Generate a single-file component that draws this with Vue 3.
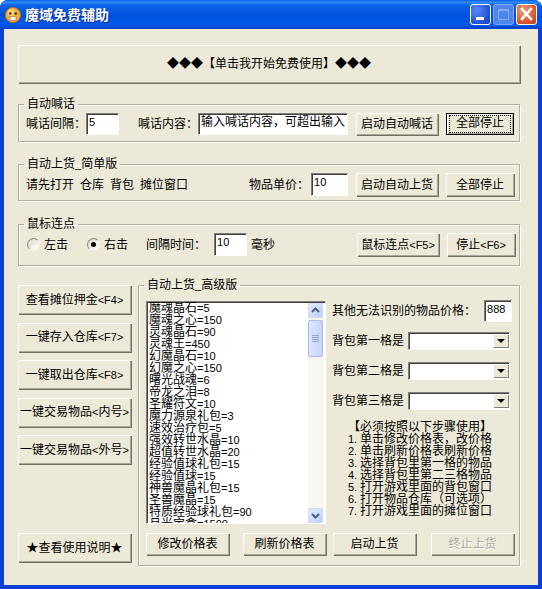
<template>
  <div class="window">
    <div class="titlebar">
      <svg class="app-icon" viewBox="0 0 18 18" width="18" height="18">
        <circle cx="9" cy="9" r="7.6" fill="#f0b040" stroke="#b86a18" stroke-width="1" />
        <circle cx="7" cy="6.5" r="3.5" fill="#fbdc8c" opacity="0.7" />
        <circle cx="6.3" cy="7.5" r="1.3" fill="#4a2a10" />
        <circle cx="11.7" cy="7.5" r="1.3" fill="#4a2a10" />
        <path d="M5.5 11.2 Q9 9.8 12.5 11.2 L12 14 Q9 15.4 6 14 Z" fill="#fff" stroke="#a05a20" stroke-width="0.6" />
      </svg>
      <span class="title">魔域免费辅助</span>
      <div class="caption-buttons">
        <div class="cap cap-min"><span class="min-bar"></span></div>
        <div class="cap cap-max"><span class="max-box"></span></div>
        <div class="cap cap-close">
          <svg viewBox="0 0 21 20" width="21" height="20">
            <path d="M6 5 L15 15 M15 5 L6 15" stroke="#fff" stroke-width="2.6" stroke-linecap="square" fill="none" />
          </svg>
        </div>
      </div>
    </div>

    <div class="client">
      <button class="btn hero">◆◆◆【单击我开始免费使用】◆◆◆</button>

      <fieldset class="group group-talk">
        <legend>自动喊话</legend>
        <div class="row">
          <span class="label">喊话间隔：</span>
          <div class="input talk-gap half">5</div>
          <span class="label talk-label">喊话内容：</span>
          <div class="input talk-text">输入喊话内容，可超出输入</div>
          <button class="btn btn-start">启动自动喊话</button>
          <button class="btn btn-stop is-default"><span class="focus">全部停止</span></button>
        </div>
      </fieldset>

      <fieldset class="group group-simple">
        <legend>自动上货<span class="half">_</span>简单版</legend>
        <div class="row">
          <span class="label">请先打开</span>
          <span class="label sp">仓库</span>
          <span class="label sp">背包</span>
          <span class="label sp">摊位窗口</span>
          <span class="label price-label">物品单价：</span>
          <div class="input price half">10</div>
          <button class="btn btn-start">启动自动上货</button>
          <button class="btn btn-stop">全部停止</button>
        </div>
      </fieldset>

      <fieldset class="group group-mouse">
        <legend>鼠标连点</legend>
        <div class="row">
          <span class="radio"></span>
          <span class="label radio-text">左击</span>
          <span class="radio is-on"></span>
          <span class="label radio-text">右击</span>
          <span class="label">间隔时间：</span>
          <div class="input time half">10</div>
          <span class="label ms">毫秒</span>
          <button class="btn btn-start btn-push">鼠标连点<span class="half">&lt;F5&gt;</span></button>
          <button class="btn btn-stop">停止<span class="half">&lt;F6&gt;</span></button>
        </div>
      </fieldset>

      <div class="lower">
        <div class="side">
          <button v-for="b in sideButtons" :key="b.text + b.mid" class="btn side-btn">
            {{ b.text }}<span class="half">&lt;</span>{{ b.mid }}<span class="half">{{ b.key }}&gt;</span>
          </button>
          <button class="btn side-btn side-help">★查看使用说明★</button>
        </div>

        <fieldset class="group group-adv">
          <legend>自动上货<span class="half">_</span>高级版</legend>
          <div class="adv-top">
            <div class="listbox">
              <div class="list-items">
                <div v-for="item in priceList" :key="item[0]" class="list-item">
                  {{ item[0] }}<span class="half">={{ item[1] }}</span>
                </div>
              </div>
              <div class="scrollbar">
                <div class="sb-btn">
                  <svg viewBox="0 0 15 15" width="15" height="15"><path d="M4 9 L7.5 5.5 L11 9" stroke="#4d6185" stroke-width="2" fill="none" /></svg>
                </div>
                <div class="sb-thumb"><span class="grip"></span></div>
                <div class="sb-fill"></div>
                <div class="sb-btn">
                  <svg viewBox="0 0 15 15" width="15" height="15"><path d="M4 6 L7.5 9.5 L11 6" stroke="#4d6185" stroke-width="2" fill="none" /></svg>
                </div>
              </div>
            </div>

            <div class="adv-right">
              <div class="row other-row">
                <span class="label">其他无法识别的物品价格：</span>
                <div class="input other half">888</div>
              </div>
              <div v-for="label in comboLabels" :key="label" class="row combo-row">
                <span class="label">{{ label }}</span>
                <div class="combo">
                  <div class="combo-arrow"><span class="tri"></span></div>
                </div>
              </div>
              <div class="steps">
                <div>【必须按照以下步骤使用】</div>
                <div v-for="(step, i) in steps" :key="step"><span class="half step-no">{{ i + 1 }}.</span>{{ step }}</div>
              </div>
            </div>
          </div>
          <div class="adv-buttons">
            <button class="btn adv-btn">修改价格表</button>
            <button class="btn adv-btn">刷新价格表</button>
            <button class="btn adv-btn">启动上货</button>
            <button class="btn adv-btn is-disabled">终止上货</button>
          </div>
        </fieldset>
      </div>
    </div>
  </div>
</template>

<script setup>
// half marks the latin part, the original font has it 6px wide
const sideButtons = [
  { text: '查看摊位押金', mid: '', key: 'F4' },
  { text: '一键存入仓库', mid: '', key: 'F7' },
  { text: '一键取出仓库', mid: '', key: 'F8' },
  { text: '一键交易物品', mid: '内号', key: '' },
  { text: '一键交易物品', mid: '外号', key: '' },
]

const priceList = [
  ['魔魂晶石', 5],
  ['魔魂之心', 150],
  ['灵魂晶石', 90],
  ['灵魂王', 450],
  ['幻魔晶石', 10],
  ['幻魔之心', 150],
  ['曙光战魂', 6],
  ['帝龙之泪', 8],
  ['圣耀符文', 10],
  ['魔力源泉礼包', 3],
  ['速效治疗包', 5],
  ['强效转世水晶', 10],
  ['超值转世水晶', 20],
  ['经验值球礼包', 15],
  ['经验值球', 15],
  ['神兽魔晶礼包', 15],
  ['圣兽魔晶', 15],
  ['特质经验球礼包', 90],
  ['月光宝盒', 1500],
]

const comboLabels = ['背包第一格是', '背包第二格是', '背包第三格是']

const steps = [
  '单击修改价格表，改价格',
  '单击刷新价格表刷新价格',
  '选择背包里第一格的物品',
  '选择背包里第二三格物品',
  '打开游戏里面的背包窗口',
  '打开物品仓库（可选项）',
  '打开游戏里面的摊位窗口',
]
</script>

<style>
html, body {
  margin: 0;
  background: #fff;
}
</style>

<style scoped>
.window {
  box-sizing: border-box;
  width: 542px;
  height: 589px;
  display: flex;
  flex-direction: column;
  background: #0a3fd8;
  border-radius: 8px 8px 0 0;
  overflow: hidden;
  font-family: "Liberation Sans", "Noto Sans CJK SC", sans-serif;
  font-size: 12px;
  line-height: 14px;
  color: #000;
}

.half {
  font-size: 11px;
}

.titlebar {
  height: 29px;
  flex: none;
  display: flex;
  align-items: center;
  padding: 0 5px 0 4px;
  background: linear-gradient(180deg, #0a5fe8 0%, #2f8cf8 8%, #0b62e8 18%, #0050e0 55%, #0058ea 85%, #0040c8 100%);
}

.app-icon {
  flex: none;
  margin-top: 1px;
}

.title {
  margin-left: 3px;
  font-size: 14px;
  font-weight: 700;
  color: #fff;
  text-shadow: 1px 1px 0 #0a2a8a;
}

.caption-buttons {
  margin-left: auto;
  display: flex;
  gap: 2px;
}

.cap {
  box-sizing: border-box;
  width: 21px;
  height: 21px;
  border: 1px solid #fff;
  border-radius: 3px;
  display: flex;
}

.cap-min {
  background: radial-gradient(circle at 30% 30%, #5a8cf5, #1f4fd8 70%, #1a3fb8);
}

.min-bar {
  width: 8px;
  height: 3px;
  margin: 12px 0 0 5px;
  background: #fff;
}

.cap-max {
  background: #4f86ee;
  border-color: #7ea8f2;
}

.max-box {
  box-sizing: border-box;
  width: 11px;
  height: 11px;
  margin: 4px;
  border: 1px solid #86aaf0;
  border-top-width: 2px;
}

.cap-close {
  background: radial-gradient(circle at 35% 30%, #f0a080, #d8552c 65%, #b83a1c);
}

.cap-close svg {
  display: block;
  margin: -1px;
}

.client {
  flex: 1;
  margin: 0 4px 4px;
  padding: 16px 17px 0 14px;
  background: #ece9d8;
  display: flex;
  flex-direction: column;
  min-height: 0;
}

.btn {
  box-sizing: border-box;
  flex: none;
  padding: 0;
  margin: 0;
  font: inherit;
  color: #000;
  background: #ece9d8;
  border: none;
  border-radius: 0;
  box-shadow: inset 1px 1px 0 #fff, inset -1px -1px 0 #aca899, 1px 1px 0 #716f64;
}

.hero {
  width: 502px;
  height: 38px;
}

.group {
  box-sizing: border-box;
  min-width: 0;
  margin: 0;
  padding: 0 5px 0 7px;
  border: 1px solid #b0ae9e;
  box-shadow: inset 1px 1px 0 #fff, 1px 1px 0 #fff;
}

.group legend {
  margin-left: -2px;
  padding: 0 3px;
  height: 14px;
  line-height: 14px;
}

.group-talk {
  width: 502px;
  height: 45px;
  margin-top: 14px;
}

.group-simple {
  width: 502px;
  height: 44px;
  margin-top: 15px;
}

.group-mouse {
  width: 502px;
  height: 49px;
  margin-top: 16px;
}

.row {
  display: flex;
  align-items: center;
}

.label {
  white-space: nowrap;
  flex: none;
}

.input {
  box-sizing: border-box;
  flex: none;
  padding: 1px 0 0 2px;
  background: #fff;
  border-style: solid;
  border-width: 1px;
  border-color: #808080 #fff #fff #808080;
  box-shadow: inset 1px 1px 0 #404040;
  white-space: nowrap;
  overflow: hidden;
}

.group-talk .row {
  height: 22px;
  margin-top: 2px;
}

.talk-gap {
  width: 33px;
  height: 22px;
}

.talk-label {
  margin-left: 19px;
}

.talk-text {
  width: 150px;
  height: 22px;
}

.btn-start {
  width: 82px;
  height: 22px;
  margin-left: 8px;
}

.btn-stop {
  width: 68px;
  height: 22px;
  margin-left: 8px;
}

.is-default {
  border: 1px solid #000;
  box-shadow: inset 1px 1px 0 #fff, inset -1px -1px 0 #aca899;
}

.focus {
  display: inline-block;
  width: 60px;
  height: 16px;
  line-height: 15px;
  outline: 1px dotted #000;
}

.group-simple .row {
  height: 23px;
  margin-top: 2px;
}

.sp {
  margin-left: 6px;
}

.price-label {
  margin-left: 61px;
}

.price {
  width: 37px;
  height: 23px;
  margin-left: 2px;
}

.group-simple .btn {
  height: 23px;
}

.group-mouse .row {
  height: 23px;
  margin-top: 2px;
}

.group-mouse .btn {
  height: 23px;
}

.radio {
  box-sizing: border-box;
  flex: none;
  width: 13px;
  height: 13px;
  margin-left: 1px;
  border-radius: 50%;
  border: 1px solid;
  border-color: #8a887a #f4f3ea #f4f3ea #8a887a;
  background: linear-gradient(135deg, #dcd9c8, #fff);
  display: flex;
  align-items: center;
  justify-content: center;
}

.radio.is-on::after {
  content: "";
  width: 5px;
  height: 5px;
  border-radius: 50%;
  background: #000;
}

.radio-text {
  margin: 0 18px 0 4px;
}

.time {
  width: 33px;
  height: 23px;
  margin-left: 8px;
}

.ms {
  margin-left: 4px;
}

.btn-push {
  margin-left: 82px;
}

.lower {
  display: flex;
  margin-top: 12px;
  flex: 1;
  min-height: 0;
}

.side {
  width: 113px;
  flex: none;
  display: flex;
  flex-direction: column;
  padding: 7px 0 4px;
  height: 288px;
  box-sizing: border-box;
}

.side-btn {
  width: 113px;
  height: 29px;
  margin-bottom: 8.5px;
  white-space: nowrap;
}

.side-help {
  margin-top: auto;
  margin-bottom: 0;
}

.group-adv {
  width: 382px;
  height: 288px;
  margin-left: 7px;
  padding: 0 0 0 7px;
}

.adv-top {
  display: flex;
  margin-top: 9px;
}

.listbox {
  box-sizing: border-box;
  flex: none;
  width: 180px;
  height: 223px;
  display: flex;
  background: #fff;
  border-style: solid;
  border-width: 1px;
  border-color: #808080 #fff #fff #808080;
  box-shadow: inset 1px 1px 0 #404040;
  padding: 1px 1px 0 2px;
}

.list-items {
  flex: 1;
  overflow: hidden;
  margin-top: -1px;
}

.list-item {
  height: 12px;
  line-height: 12px;
  white-space: nowrap;
}

.scrollbar {
  width: 15px;
  flex: none;
  display: flex;
  flex-direction: column;
  background: #f7f6ef;
  margin-right: 1px;
}

.sb-btn {
  height: 15px;
  flex: none;
  border-radius: 2px;
  background: linear-gradient(135deg, #e4edfd, #bccdf5);
  box-shadow: inset 0 0 0 1px #cfdcf8;
}

.sb-btn svg {
  display: block;
}

.sb-thumb {
  height: 37px;
  margin-top: 2px;
  flex: none;
  border-radius: 2px;
  border: 1px solid #a8bdec;
  box-sizing: border-box;
  background: linear-gradient(90deg, #dce6fb, #c7d6f8);
  display: flex;
  align-items: center;
  justify-content: center;
}

.grip {
  width: 7px;
  height: 7px;
  background: repeating-linear-gradient(180deg, #8ba4da 0 1px, transparent 1px 2px);
}

.sb-fill {
  flex: 1;
}

.adv-right {
  flex: 1;
  padding-left: 6px;
  min-width: 0;
}

.other-row {
  height: 22px;
  margin-top: -1px;
}

.other {
  width: 28px;
  height: 22px;
  margin-left: 8px;
}

.combo-row {
  height: 18px;
  margin-top: 12px;
}

.combo-row:nth-child(2) {
  margin-top: 10px;
}

.combo {
  box-sizing: border-box;
  width: 102px;
  height: 18px;
  margin-left: 4px;
  background: #fff;
  border-style: solid;
  border-width: 1px;
  border-color: #808080 #fff #fff #808080;
  box-shadow: inset 1px 1px 0 #404040;
  display: flex;
  justify-content: flex-end;
}

.combo-arrow {
  box-sizing: border-box;
  width: 16px;
  height: 14px;
  margin: 1px 0;
  background: #ece9d8;
  box-shadow: inset 1px 1px 0 #fff, inset -1px -1px 0 #808080;
  display: flex;
  align-items: center;
  justify-content: center;
}

.tri {
  width: 0;
  height: 0;
  border-left: 4px solid transparent;
  border-right: 4px solid transparent;
  border-top: 4px solid #000;
}

.steps {
  margin: 11px 0 0 16px;
  line-height: 12px;
  white-space: nowrap;
}

.step-no {
  display: inline-block;
  width: 12px;
}

.adv-buttons {
  display: flex;
  margin-top: 9px;
}

.adv-btn {
  width: 83px;
  height: 22px;
  margin-right: 14px;
}

.adv-btn:nth-child(2) {
  margin-right: 7px;
}

.adv-btn:nth-child(3) {
  margin-right: 15px;
}

.is-disabled {
  color: #aca899;
  text-shadow: 1px 1px 0 #fff;
}
</style>
